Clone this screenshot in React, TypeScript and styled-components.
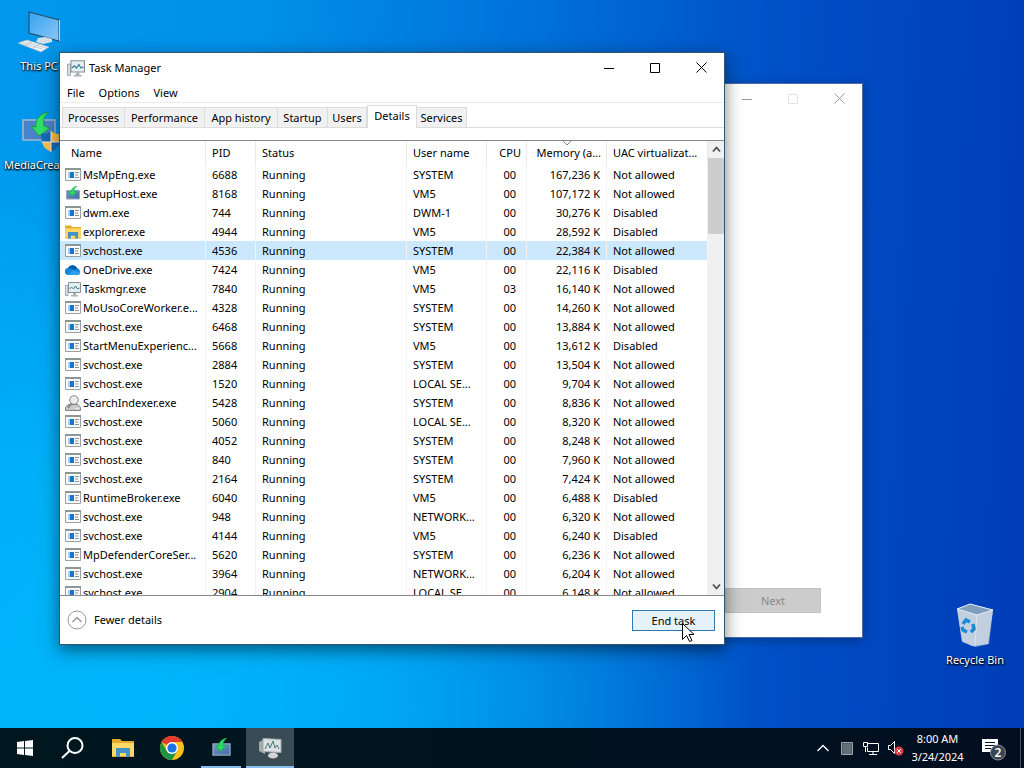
import React from "react";
import styled, { createGlobalStyle } from "styled-components";

const Global = createGlobalStyle`
  *{box-sizing:border-box}
  body{margin:0;font:11px/18px "Noto Sans",sans-serif;color:#000}
  button{font:inherit;color:inherit;border:0;background:none;padding:0}
`;

const Desktop = styled.main`
  position: relative;
  min-height: 100vh;
  display: flex;
  flex-direction: column;
  justify-content: flex-end;
  overflow: hidden;
  background:
    radial-gradient(ellipse 62% 75% at 12% 90%, rgba(0,190,255,.8) 0%, rgba(0,190,255,.65) 40%, rgba(0,180,250,0) 100%),
    linear-gradient(92deg, #0098ec 0%, #0090ea 25%, #0070d8 52%, #0050c6 74%, #003cb8 100%);
`;

const Shortcut = styled.a<{ $x: number; $y: number }>`
  position: absolute;
  left: ${p => p.$x}px;
  top: ${p => p.$y}px;
  width: 76px;
  display: flex;
  flex-direction: column;
  align-items: center;
  gap: 3px;
  color: #fff;
  text-decoration: none;
  white-space: nowrap;
  text-shadow: 1px 1px 2px #000, 0 1px 2px #000;
`;
const ShortcutLabel = styled.span<{ $left?: boolean }>`align-self: ${p => (p.$left ? "flex-start" : "center")};`;

const Window = styled.section<{ $x: number; $y: number; $w: number; $h: number; $front?: boolean }>`
  position: absolute;
  left: ${p => p.$x}px;
  top: ${p => p.$y}px;
  width: ${p => p.$w}px;
  height: ${p => p.$h}px;
  display: flex;
  flex-direction: column;
  background: #fff;
  border: 1px solid ${p => (p.$front ? "#33566f" : "#4a6da5")};
  box-shadow: ${p => (p.$front ? "0 5px 16px rgba(0,0,0,.5)" : "0 2px 10px rgba(0,0,0,.3)")};
`;

const Row = styled.div`display: flex; align-items: center;`;
const TitleBar = styled(Row)`height: 29px; flex: none; padding-left: 7px;`;
const Title = styled.h1`flex: 1; margin: 0 0 0 4px; font-size: 11px; font-weight: 400;`;
const Caption = styled.button<{ $muted?: boolean }>`
  width: 46px;
  height: 29px;
  display: grid;
  place-items: center;
  color: ${p => (p.$muted ? "#999" : "#000")};
  &:disabled { color: #e4e4e4; }
`;

const MenuBar = styled.nav`
  display: flex;
  align-items: center;
  height: 21px;
  flex: none;
  gap: 14px;
  padding: 2px 0 0 7px;
  border-bottom: 1px solid #ececec;
`;
const Tabs = styled.div`
  display: flex;
  align-items: flex-end;
  height: 25px;
  flex: none;
  padding-left: 2px;
  border-bottom: 1px solid #dcdcdc;
`;
const Tab = styled.button<{ $w: number; $on?: boolean }>`
  width: ${p => p.$w}px;
  height: ${p => (p.$on ? 23 : 20)}px;
  padding-bottom: ${p => (p.$on ? 3 : 0)}px;
  margin-bottom: ${p => (p.$on ? -1 : 0)}px;
  border: 1px solid #dcdcdc;
  border-bottom: 0;
  border-left-width: ${p => (p.$on ? 1 : 0)}px;
  background: ${p => (p.$on ? "#fff" : "#f1f1f1")};
  white-space: nowrap;
  &:first-child { border-left-width: 1px; }
`;

const ListArea = styled.div`
  display: flex;
  flex: 1;
  min-height: 0;
  margin-top: 12px;
  overflow: hidden;
  border-top: 1px solid #888;
  border-bottom: 1px solid #888;
`;
const Table = styled.table`
  flex: 1 1 0;
  width: 100%;
  min-width: 0;
  table-layout: fixed;
  border-collapse: separate;
  border-spacing: 0;
`;
const Head = styled.th<{ $right?: boolean }>`
  position: relative;
  height: 24px;
  padding: 0 5px 0 6px;
  font-weight: 400;
  text-align: ${p => (p.$right ? "right" : "left")};
  border-right: 1px solid #e9e9e9;
  overflow: hidden;
  white-space: nowrap;
  &:first-child { padding-left: 11px; }
`;
const SortMark = styled.svg`position: absolute; left: 50%; top: 0; margin-left: -4px;`;
const Cell = styled.td<{ $right?: number }>`
  height: 19px;
  padding: 0 ${p => p.$right ?? 2}px 0 6px;
  line-height: 19px;
  text-align: ${p => (p.$right ? "right" : "left")};
  border-right: 1px solid #f3f3f3;
  overflow: hidden;
  white-space: nowrap;
`;
const ProcessRow = styled.tr<{ $on: boolean }>`background: ${p => (p.$on ? "#cce8ff" : "#fff")};`;
const NameCell = styled(Row)`
  margin: 0 0 0 -1px;
  gap: 2px;
  svg { flex: none; }
`;

const ScrollBar = styled.div`
  width: 16px;
  flex: none;
  display: flex;
  flex-direction: column;
  background: #f0f0f0;
  color: #505050;
`;
const ScrollButton = styled.button`height: 17px; display: grid; place-items: center;`;
const Thumb = styled.div`height: 76px; background: #cdcdcd;`;
const Gap = styled.div`flex: 1;`;

const Footer = styled(Row)`height: 48px; flex: none; padding: 0 9px 0 7px; justify-content: space-between;`;
const Fewer = styled.button`display: flex; align-items: center; gap: 7px;`;
const EndTask = styled.button`width: 83px; height: 21px; line-height: 19px; background: #e5f1fb; border: 1px solid #3078b0;`;
const SetupFooter = styled.div`margin-top: auto; padding: 0 41px 24px 0; display: flex; justify-content: flex-end;`;
const Next = styled.button`width: 96px; height: 25px; background: #ccc; border: 1px solid #c2c2c2; color: #888;`;
const Cursor = styled.svg`position: absolute; left: 682px; top: 623px;`;

const Taskbar = styled.footer`
  position: relative;
  display: flex;
  align-items: stretch;
  height: 40px;
  padding-left: 1px;
  color: #fff;
  background: linear-gradient(90deg, #00171f, #020e20);
`;
const TaskButton = styled.button<{ $active?: boolean; $open?: boolean }>`
  width: 48px;
  margin-right: 1px;
  display: grid;
  place-items: center;
  background-color: ${p => (p.$active ? "#394b55" : "transparent")};
  background-image: ${p => (p.$open || p.$active ? "linear-gradient(#85bdec, #85bdec)" : "none")};
  background-repeat: no-repeat;
  background-position: bottom;
  background-size: ${p => (p.$active ? "100%" : "40px")} 2px;
`;
const Tray = styled(Row)`margin-left: auto; height: 40px;`;
const TrayButton = styled.button<{ $w: number }>`width: ${p => p.$w}px; height: 40px; display: grid; place-items: center;`;
const Clock = styled.time`width: 61px; text-align: center; white-space: nowrap;`;
const ShowDesktop = styled.button`width: 4px; height: 40px; border-left: 1px solid #46545f;`;

const ExeIcon = () => (
  <svg width="16" height="13" viewBox="0 0 16 13">
    <path d="M.5.5h15v12H.5z" fill="#fafafa" stroke="#9aa0a3" />
    <path d="M0 0h16v2H0z" fill="#8d9699" />
    <path d="M5 4h4v6H5z" fill="#1874cd" />
    <path d="M3 4h2v6H3z" fill="#a9cdea" />
    <path d="M10 4.500h4M10 7h3M10 9.500h4" stroke="#8a949c" />
  </svg>
);
const SetupIcon = ({ w = 16 }: { w?: number }) => (
  <svg width={w} height={w} viewBox="0 0 16 16">
    <defs><linearGradient id="screen" x2="1" y2="1"><stop stopColor="#7899c0" /><stop offset="1" stopColor="#3d6da8" /></linearGradient></defs>
    <path d="M1.500 4.500h13v8.500h-13z" fill="url(#screen)" stroke="#8ea8bf" />
    <path d="M12 0C8 1 6 3 6 6L3.500 5.500 7 10l4.500-4-2.500-.3C9 3 10 2 12 0z" fill="#22e05a" stroke="#11a744" strokeWidth=".4" />
  </svg>
);
const FolderIcon = ({ w = 16 }: { w?: number }) => (
  <svg width={w} height={w} viewBox="0 0 22 20">
    <path d="M0 1h8l2 2h12v16H0z" fill="#e5a92c" />
    <path d="M0 5h22v13H0z" fill="#ffd967" />
    <path d="M4 10h14v9h-4v-4H8v4H4z" fill="#4593c7" />
  </svg>
);
const CloudIcon = () => (
  <svg width="16" height="12" viewBox="0 0 16 12">
    <path d="M3.500 11A3.500 3.500 0 0 1 3 4a5 5 0 0 1 9 0 3.700 3.700 0 0 1 .8 7z" fill="#1686dc" />
    <path d="M3 4a5 5 0 0 1 9 0L10 6 6 4.500z" fill="#0759a8" />
    <path d="M8 6l7.500 3a3 3 0 0 1-2.700 2H3z" fill="#29a0ea" />
  </svg>
);
const MonitorIcon = ({ w = 16 }: { w?: number }) => (
  <svg width={w} height={w} viewBox="0 0 16 16">
    <path d="M.5 4.500h2.500v10H.5z" fill="#dfe5e7" stroke="#829299" strokeWidth=".7" />
    <path d="M3.500 1.500h12v10h-12z" fill="#e5eef1" stroke="#829299" />
    <path d="M4.500 8l2-2 2 2 2-3 2 3 2-1" fill="none" stroke="#397d96" />
    <path d="M8 12h3v2h2v1.500H6V14h2z" fill="#a8b4b8" />
  </svg>
);
const SearchIndexIcon = () => (
  <svg width="16" height="16" viewBox="0 0 16 16" stroke="#858585">
    <path d="M3 9.500h10l2.500 3v3H.5v-3z" fill="#c9c9c9" />
    <circle cx="9" cy="5" r="4.300" fill="#e9eef0" />
    <path d="M6.500 8.500L3 13" strokeWidth="2" />
    <path d="M10 13.500h4" stroke="#eee" />
  </svg>
);
const Chevron = ({ down, w = 9 }: { down?: boolean; w?: number }) => (
  <svg width={w} height={w} viewBox="0 0 9 9" fill="none" stroke="currentColor">
    <path d={down ? "M1 2.500l3.500 4L8 2.500" : "M1 6.500l3.500-4L8 6.500"} strokeWidth="1.800" />
  </svg>
);

const CaptionButtons = ({ muted }: { muted?: boolean }) => (
  <Row>
    <Caption aria-label="Minimize" $muted={muted}><svg width="10" height="10"><path d="M0 5.500h10" stroke="currentColor" /></svg></Caption>
    <Caption aria-label="Maximize" $muted={muted} disabled={muted}><svg width="10" height="10"><path d="M.5.5h9v9h-9z" fill="none" stroke="currentColor" /></svg></Caption>
    <Caption aria-label="Close" $muted={muted}><svg width="11" height="11"><path d="M.5.5l10 10M10.500.5l-10 10" stroke="currentColor" /></svg></Caption>
  </Row>
);

type Process = [string, string, string, string, string, string];
const processes: Process[] = [
  ["MsMpEng.exe", "6688", "SYSTEM", "00", "167,236", "Not allowed"],
  ["SetupHost.exe", "8168", "VM5", "00", "107,172", "Not allowed"],
  ["dwm.exe", "744", "DWM-1", "00", "30,276", "Disabled"],
  ["explorer.exe", "4944", "VM5", "00", "28,592", "Disabled"],
  ["svchost.exe", "4536", "SYSTEM", "00", "22,384", "Not allowed"],
  ["OneDrive.exe", "7424", "VM5", "00", "22,116", "Disabled"],
  ["Taskmgr.exe", "7840", "VM5", "03", "16,140", "Not allowed"],
  ["MoUsoCoreWorker.e...", "4328", "SYSTEM", "00", "14,260", "Not allowed"],
  ["svchost.exe", "6468", "SYSTEM", "00", "13,884", "Not allowed"],
  ["StartMenuExperienc...", "5668", "VM5", "00", "13,612", "Disabled"],
  ["svchost.exe", "2884", "SYSTEM", "00", "13,504", "Not allowed"],
  ["svchost.exe", "1520", "LOCAL SE...", "00", "9,704", "Not allowed"],
  ["SearchIndexer.exe", "5428", "SYSTEM", "00", "8,836", "Not allowed"],
  ["svchost.exe", "5060", "LOCAL SE...", "00", "8,320", "Not allowed"],
  ["svchost.exe", "4052", "SYSTEM", "00", "8,248", "Not allowed"],
  ["svchost.exe", "840", "SYSTEM", "00", "7,960", "Not allowed"],
  ["svchost.exe", "2164", "SYSTEM", "00", "7,424", "Not allowed"],
  ["RuntimeBroker.exe", "6040", "VM5", "00", "6,488", "Disabled"],
  ["svchost.exe", "948", "NETWORK...", "00", "6,320", "Not allowed"],
  ["svchost.exe", "4144", "VM5", "00", "6,240", "Disabled"],
  ["MpDefenderCoreSer...", "5620", "SYSTEM", "00", "6,236", "Not allowed"],
  ["svchost.exe", "3964", "NETWORK...", "00", "6,204", "Not allowed"],
  ["svchost.exe", "2904", "LOCAL SE...", "00", "6,148", "Not allowed"],
];
const icons: Record<string, React.ReactNode> = {
  "SetupHost.exe": <SetupIcon />,
  "explorer.exe": <FolderIcon />,
  "OneDrive.exe": <CloudIcon />,
  "Taskmgr.exe": <MonitorIcon />,
  "SearchIndexer.exe": <SearchIndexIcon />,
};
const tabs: [string, number][] = [["Processes", 63], ["Performance", 80], ["App history", 73], ["Startup", 50], ["Users", 39], ["Details", 50], ["Services", 50]];
const columns: [string, number][] = [["Name", 146], ["PID", 50], ["Status", 151], ["User name", 80], ["CPU", 40], ["Memory (a...", 80], ["UAC virtualizat...", 101]];

export default function App() {
  return (
    <Desktop>
      <Global />
      <Shortcut href="#pc" $x={1} $y={10}>
        <svg width="46" height="44" viewBox="0 0 46 44">
          <defs><linearGradient id="pc" x2="1" y2="1"><stop stopColor="#35a2f1" /><stop offset="1" stopColor="#8ac8f6" /></linearGradient></defs>
          <path d="M13 2l30 8v21l-30-8z" fill="url(#pc)" stroke="#25506d" strokeWidth="1.200" />
          <path d="M43.500 10v21" stroke="#c9d4dc" strokeWidth="1" />
          <path d="M22 28l7-1 7 2v3l-9 2-7-2z" fill="#d7dfe4" />
          <path d="M2 33l9-3 22 7-8 5z" fill="#eef1f3" stroke="#aeb9c0" strokeWidth=".6" />
          <path d="M6 33l20 6M10 32l20 6M9 36l7-4M17 38l7-4" stroke="#aeb9c0" strokeWidth=".6" />
        </svg>
        <ShortcutLabel>This PC</ShortcutLabel>
      </Shortcut>
      <Shortcut href="#media" $x={4} $y={109}>
        <svg width="42" height="44" viewBox="0 0 42 44">
          <path d="M2 11h32v20H2z" fill="#4a83ca" stroke="#a5b9cc" strokeWidth="1.500" />
          <path d="M28 3C17 5 14 12 15 18l-5-1 8 10 11-8-6-2c-1-7 0-10 5-14z" fill="#30df64" stroke="#159b46" />
          <path d="M30 22c4 3 7 3 10 3-1 10-3 14-10 18-7-4-10-9-10-18 4 0 7-1 10-3z" fill="#176ab5" />
          <path d="M30 22c4 3 7 3 10 3v8H30zM21 33h9v10c-6-3-8-6-9-10z" fill="#ffc14d" />
          <path d="M30 22v21M20.500 33h19" stroke="#e8eef2" />
        </svg>
        <ShortcutLabel $left>MediaCrea</ShortcutLabel>
      </Shortcut>
      <Shortcut href="#bin" $x={937} $y={600}>
        <svg width="40" height="48" viewBox="0 0 40 48">
          <path d="M2 9l13-5 23 6-5 34-16 2-10-5z" fill="#b8c9d9" fillOpacity=".85" />
          <path d="M2 9l20 6 16-5-4 34-14 3L7 42z" fill="#d8e1e9" fillOpacity=".6" />
          <path d="M2 9l13-5 23 6-16 5z" fill="#839fbf" stroke="#e8f0f6" />
          <path d="M22 15l-2 31" stroke="#edf2f6" strokeOpacity=".6" />
          <g fill="none" stroke="#1689d8" strokeWidth="3.500"><path d="M8 24l3-4 4 2M18 24l1 5-3 3M12 32l-4-2-1-3" /></g>
        </svg>
        <ShortcutLabel>Recycle Bin</ShortcutLabel>
      </Shortcut>

      <Window $x={460} $y={83} $w={403} $h={555}>
        <TitleBar><Title aria-label="Windows Setup" /><CaptionButtons muted /></TitleBar>
        <SetupFooter><Next disabled>Next</Next></SetupFooter>
      </Window>

      <Window $front $x={59} $y={52} $w={666} $h={593}>
        <TitleBar><MonitorIcon w={18} /><Title>Task Manager</Title><CaptionButtons /></TitleBar>
        <MenuBar><button>File</button><button>Options</button><button>View</button></MenuBar>
        <Tabs role="tablist">
          {tabs.map(([t, w]) => <Tab key={t} role="tab" $w={w} $on={t === "Details"} aria-selected={t === "Details"}>{t}</Tab>)}
        </Tabs>
        <ListArea>
          <Table>
            <colgroup>{columns.map(([c, w]) => <col key={c} width={w} />)}</colgroup>
            <thead><tr>{columns.map(([c], i) => (
              <Head key={c} $right={i === 4 || i === 5}>
                {c}
                {i === 5 && <SortMark width="8" height="5"><path d="M0 0l4 4 4-4" fill="none" stroke="#888" /></SortMark>}
              </Head>
            ))}</tr></thead>
            <tbody>{processes.map(([name, pid, user, cpu, mem, uac]) => (
              <ProcessRow key={pid} $on={pid === "4536"}>
                <Cell><NameCell>{icons[name] ?? <ExeIcon />}<span>{name}</span></NameCell></Cell>
                <Cell>{pid}</Cell>
                <Cell>Running</Cell>
                <Cell>{user}</Cell>
                <Cell $right={10}>{cpu}</Cell>
                <Cell $right={6}>{mem} K</Cell>
                <Cell>{uac}</Cell>
              </ProcessRow>
            ))}</tbody>
          </Table>
          <ScrollBar>
            <ScrollButton aria-label="Scroll up"><Chevron /></ScrollButton>
            <Thumb />
            <Gap />
            <ScrollButton aria-label="Scroll down"><Chevron down /></ScrollButton>
          </ScrollBar>
        </ListArea>
        <Footer>
          <Fewer>
            <svg width="20" height="20" fill="none" stroke="#999"><circle cx="10" cy="10" r="9" /><path d="M5.500 12l4.500-4.500 4.500 4.500" strokeWidth="1.500" /></svg>
            Fewer details
          </Fewer>
          <EndTask>End task</EndTask>
        </Footer>
      </Window>
      <Cursor width="13" height="20"><path d="M.5.5v16l4-4 3 6 2.500-1-3-6h5z" fill="#fff" stroke="#000" /></Cursor>

      <Taskbar>
        <TaskButton aria-label="Start"><svg width="16" height="16" fill="#fff"><path d="M0 2l7-1v6.500H0zM8 1l8-1v7.500H8zM0 8.500h7V15l-7-1zM8 8.500h8V16l-8-1z" /></svg></TaskButton>
        <TaskButton aria-label="Search"><svg width="26" height="22" fill="none" stroke="#fff" strokeWidth="2"><circle cx="14" cy="8.500" r="7.500" /><path d="M8.500 14L1 21" /></svg></TaskButton>
        <TaskButton aria-label="File Explorer"><FolderIcon w={22} /></TaskButton>
        <TaskButton aria-label="Chrome">
          <svg width="24" height="24" viewBox="0 0 24 24">
            <circle cx="12" cy="12" r="12" fill="#fbc116" />
            <path d="M12 12L1.600 6A12 12 0 0 1 22.400 6H12z" fill="#e33b2e" />
            <path d="M1.600 6A12 12 0 0 0 12 24l5.200-9L12 12l-5.200 3z" fill="#229342" />
            <circle cx="12" cy="12" r="6" fill="#fff" /><circle cx="12" cy="12" r="4.600" fill="#1a73e8" />
          </svg>
        </TaskButton>
        <TaskButton aria-label="Setup" $open><SetupIcon w={21} /></TaskButton>
        <TaskButton aria-label="Task Manager" $active>
          <svg width="24" height="22" viewBox="0 0 24 22"><path d="M1 5l6-3v15l-6-3z" fill="#a5abad" /><path d="M5 1.500l18 1v13l-18-1z" fill="#dce1e2" stroke="#a6adaf" /><path d="M7 12l3-6 2 5 3-7 2 7 2-3 2 4" fill="none" stroke="#47767f" /><ellipse cx="15" cy="18.500" rx="5" ry="3" fill="#d4d4d4" /></svg>
        </TaskButton>
        <Tray>
          <TrayButton $w={24} aria-label="Show hidden icons"><svg width="12" height="8" fill="none" stroke="#fff" strokeWidth="1.300"><path d="M.5 7L6 1.500 11.500 7" /></svg></TrayButton>
          <TrayButton $w={24} aria-label="Input"><svg width="12" height="13" stroke="#9aa5ac"><path d="M.5.5h11v12H.5z" fill="#39454e" /><path d="M3 1v11M5 1v11M7 1v11M9 1v11M1 3h10M1 5h10M1 7h10M1 9h10M1 11h10" strokeWidth=".5" /></svg></TrayButton>
          <TrayButton $w={24} aria-label="Network"><svg width="16" height="15" fill="none" stroke="#fff"><path d="M5 2.500h10.500v8H4.500v-4M.5 1.500h4v4h-4zM2.500 6v5M10 11v3M6 13.500h8" /></svg></TrayButton>
          <TrayButton $w={24} aria-label="Volume muted"><svg width="17" height="16"><path d="M1.500 5.500h2l4-4v12l-4-4h-2z" fill="none" stroke="#fff" /><circle cx="12" cy="11" r="4.500" fill="#d83a40" /><path d="M10 9l4 4M14 9l-4 4" stroke="#fff" /></svg></TrayButton>
          <Clock dateTime="2024-03-24T08:00">8:00 AM<br />3/24/2024</Clock>
          <TrayButton $w={52} aria-label="2 notifications">
            <svg width="26" height="26"><path d="M1 4h16v13h-3v3l-4-3H1z" fill="#fff" /><path d="M4 7.500h10M4 10.500h10M4 13.500h6" stroke="#02142a" /><circle cx="17" cy="17.500" r="7.500" fill="#3a454e" stroke="#8a959c" /><text x="17" y="22" fill="#fff" fontSize="12" fontWeight="600" textAnchor="middle">2</text></svg>
          </TrayButton>
          <ShowDesktop aria-label="Show desktop" />
        </Tray>
      </Taskbar>
    </Desktop>
  );
}
